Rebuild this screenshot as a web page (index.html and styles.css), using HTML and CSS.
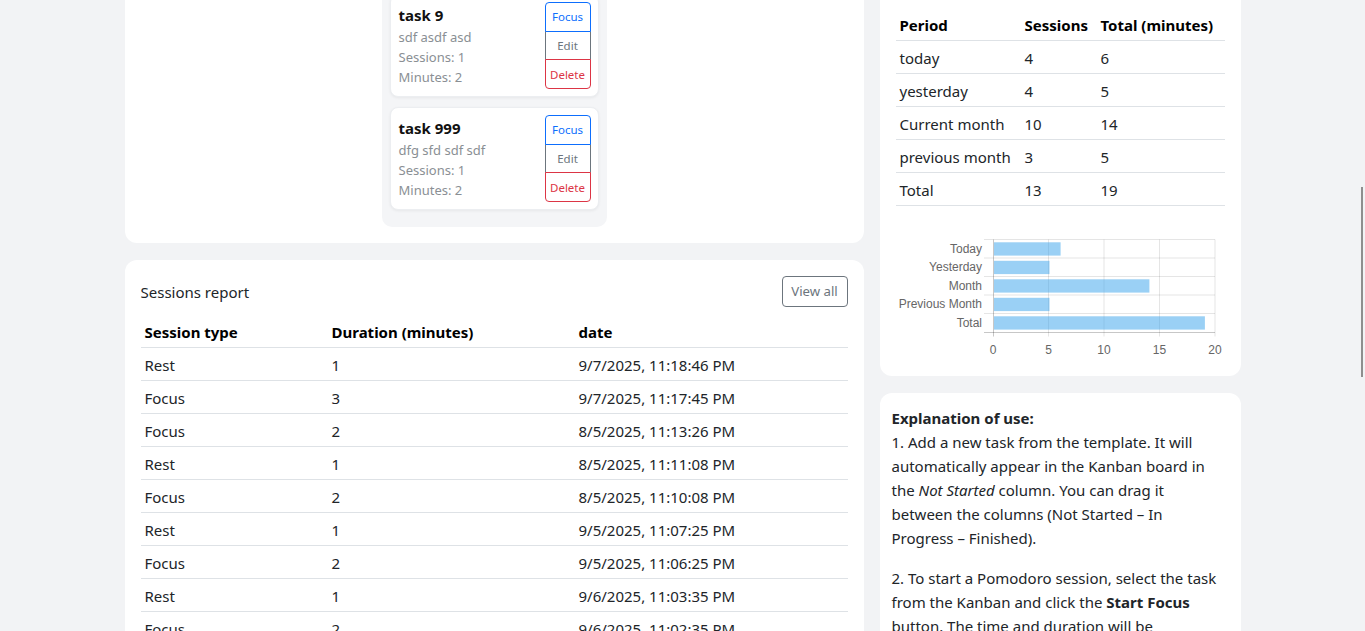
FILE: index.html
```html
<!DOCTYPE html>
<html lang="en">
<head>
<meta charset="utf-8">
<title>Pomodoro Kanban</title>
<link rel="stylesheet" href="styles.css">
</head>
<body>
<div class="page">
  <div class="col">
    <section class="card board-card">
      <div class="board">
        <div class="kcol kcol-short">
          <h6 class="kcol-title">Not Started</h6>
        </div>
        <div class="kcol">
          <h6 class="kcol-title">In Progress</h6>
          <div class="task">
            <div class="task-body">
              <div class="task-title">task 9</div>
              <div class="task-meta">sdf asdf asd</div>
              <div class="task-meta">Sessions: 1</div>
              <div class="task-meta">Minutes: 2</div>
            </div>
            <div class="btn-vgroup">
              <button class="sbtn sbtn-blue">Focus</button>
              <button class="sbtn sbtn-gray">Edit</button>
              <button class="sbtn sbtn-red">Delete</button>
            </div>
          </div>
          <div class="task">
            <div class="task-body">
              <div class="task-title">task 999</div>
              <div class="task-meta">dfg sfd sdf sdf</div>
              <div class="task-meta">Sessions: 1</div>
              <div class="task-meta">Minutes: 2</div>
            </div>
            <div class="btn-vgroup">
              <button class="sbtn sbtn-blue">Focus</button>
              <button class="sbtn sbtn-gray">Edit</button>
              <button class="sbtn sbtn-red">Delete</button>
            </div>
          </div>
        </div>
        <div class="kcol kcol-short">
          <h6 class="kcol-title">Finished</h6>
        </div>
      </div>
    </section>

    <section class="card sessions-card">
      <div class="sessions-head">
        <span class="sessions-title">Sessions report</span>
        <button class="btn-outline">View all</button>
      </div>
      <table class="tbl sessions-tbl">
        <thead>
          <tr><th class="c1">Session type</th><th class="c2">Duration (minutes)</th><th>date</th></tr>
        </thead>
        <tbody>
          <tr><td>Rest</td><td>1</td><td>9/7/2025, 11:18:46 PM</td></tr>
          <tr><td>Focus</td><td>3</td><td>9/7/2025, 11:17:45 PM</td></tr>
          <tr><td>Focus</td><td>2</td><td>8/5/2025, 11:13:26 PM</td></tr>
          <tr><td>Rest</td><td>1</td><td>8/5/2025, 11:11:08 PM</td></tr>
          <tr><td>Focus</td><td>2</td><td>8/5/2025, 11:10:08 PM</td></tr>
          <tr><td>Rest</td><td>1</td><td>9/5/2025, 11:07:25 PM</td></tr>
          <tr><td>Focus</td><td>2</td><td>9/5/2025, 11:06:25 PM</td></tr>
          <tr><td>Rest</td><td>1</td><td>9/6/2025, 11:03:35 PM</td></tr>
          <tr><td>Focus</td><td>2</td><td>9/6/2025, 11:02:35 PM</td></tr>
          <tr><td>Rest</td><td>1</td><td>9/6/2025, 10:59:35 PM</td></tr>
        </tbody>
      </table>
    </section>
  </div>

  <div class="col">
    <section class="card stats-card">
      <h5 class="stats-title">Statistics</h5>
      <table class="tbl stats-tbl">
        <thead>
          <tr><th class="s1">Period</th><th class="s2">Sessions</th><th>Total (minutes)</th></tr>
        </thead>
        <tbody>
          <tr><td>today</td><td>4</td><td>6</td></tr>
          <tr><td>yesterday</td><td>4</td><td>5</td></tr>
          <tr><td>Current month</td><td>10</td><td>14</td></tr>
          <tr><td>previous month</td><td>3</td><td>5</td></tr>
          <tr><td>Total</td><td>13</td><td>19</td></tr>
        </tbody>
      </table>
      <svg class="chart" width="329" height="130" viewBox="0 0 329 130" xmlns="http://www.w3.org/2000/svg">
        <g stroke="rgba(0,0,0,0.1)" stroke-width="1">
          <line x1="152.5" y1="9.5" x2="152.5" y2="106.5"/>
          <line x1="208" y1="9.5" x2="208" y2="106.5"/>
          <line x1="263.5" y1="9.5" x2="263.5" y2="106.5"/>
          <line x1="319" y1="9.5" x2="319" y2="106.5"/>
          <line x1="88" y1="9.5" x2="319" y2="9.5"/>
          <line x1="88" y1="28" x2="319" y2="28"/>
          <line x1="88" y1="46.5" x2="319" y2="46.5"/>
          <line x1="88" y1="65" x2="319" y2="65"/>
          <line x1="88" y1="83.5" x2="319" y2="83.5"/>
        </g>
        <g stroke="rgba(0,0,0,0.22)" stroke-width="1">
          <line x1="97.5" y1="9.5" x2="97.5" y2="106.5"/>
          <line x1="88" y1="102.5" x2="319" y2="102.5"/>
        </g>
        <g fill="rgba(54,162,235,0.5)">
          <rect x="98" y="12.3" width="66.6" height="13.3"/>
          <rect x="98" y="30.8" width="55.5" height="13.3"/>
          <rect x="98" y="49.3" width="155.4" height="13.3"/>
          <rect x="98" y="67.8" width="55.5" height="13.3"/>
          <rect x="98" y="86.3" width="210.9" height="13.3"/>
        </g>
        <g class="chart-label" text-anchor="end">
          <text x="86" y="22.5">Today</text>
          <text x="86" y="41">Yesterday</text>
          <text x="86" y="59.5">Month</text>
          <text x="86" y="78">Previous Month</text>
          <text x="86" y="96.5">Total</text>
        </g>
        <g class="chart-label" text-anchor="middle">
          <text x="97" y="123.5">0</text>
          <text x="152.5" y="123.5">5</text>
          <text x="208" y="123.5">10</text>
          <text x="263.5" y="123.5">15</text>
          <text x="319" y="123.5">20</text>
        </g>
      </svg>
    </section>

    <section class="card help-card">
      <p><strong>Explanation of use:</strong><br>
      1. Add a new task from the template. It will automatically appear in the Kanban board in the <em>Not Started</em> column. You can drag it between the columns (Not Started – In Progress – Finished).</p>
      <p>2. To start a Pomodoro session, select the task from the Kanban and click the <strong>Start Focus</strong> button. The time and duration will be automatically recorded in the Sessions report.</p>
    </section>
  </div>
</div>
<div class="scroll-thumb"></div>
</body>
</html>
```
FILE: styles.css
```css
* { box-sizing: border-box; }

html, body {
  height: 100%;
}

body {
  margin: 0;
  overflow: hidden;
  background: #f2f3f5;
  font-family: "Noto Sans", "Open Sans", sans-serif;
  font-size: 15px;
  line-height: 24px;
  color: #212529;
}

.page {
  width: 1116px;
  margin: -62px auto 0;
  display: grid;
  grid-template-columns: 739px 361px;
  column-gap: 16px;
  align-items: start;
}

.col {
  display: flex;
  flex-direction: column;
  gap: 17px;
}

.card {
  background: #fff;
  border-radius: 12px;
}

/* Kanban board */
.board-card {
  padding: 16px;
}

.board {
  display: grid;
  grid-template-columns: repeat(3, 225px);
  column-gap: 16px;
  align-items: start;
}

.kcol {
  background: #f4f5f7;
  border-radius: 10px;
  padding: 8px 8px 7px;
}

.kcol-short {
  height: 40px;
}

.kcol-title {
  margin: 0 0 8px;
  font-size: 15px;
  line-height: 24px;
  font-weight: 700;
}

.task {
  display: flex;
  justify-content: space-between;
  align-items: flex-start;
  background: #fff;
  border: 1px solid #eceef1;
  border-radius: 8px;
  box-shadow: 0 1px 3px rgba(0, 0, 0, 0.06);
  padding: 7px 7px 7px 8px;
  margin-bottom: 10px;
}

.task-body {
  padding-top: 1px;
}

.task-title {
  font-size: 15px;
  font-weight: 700;
  line-height: 24px;
  color: #111;
}

.task-meta {
  font-size: 13px;
  line-height: 20px;
  color: #8a8f94;
}

.btn-vgroup {
  display: flex;
  flex-direction: column;
  width: 46px;
}

.sbtn {
  font-family: inherit;
  font-size: 11.5px;
  line-height: 17px;
  height: 29.67px;
  padding: 0;
  background: #fff;
  border: 1px solid;
  border-radius: 0;
  margin-top: -1px;
  position: relative;
}

.sbtn:first-child {
  margin-top: 0;
  border-radius: 4px 4px 0 0;
}

.sbtn:last-child {
  border-radius: 0 0 4px 4px;
}

.sbtn-blue { color: #0d6efd; border-color: #0d6efd; z-index: 1; }
.sbtn-gray { color: #6c757d; border-color: #6c757d; }
.sbtn-red  { color: #dc3545; border-color: #dc3545; z-index: 1; }

/* Sessions report */
.sessions-card {
  padding: 16px;
}

.sessions-head {
  display: flex;
  justify-content: space-between;
  align-items: center;
  height: 31px;
  margin-bottom: 8px;
}

.sessions-title {
  font-size: 15px;
  line-height: 24px;
  padding-top: 1px;
  color: #212529;
}

.btn-outline {
  font-family: inherit;
  font-size: 13.2px;
  line-height: 20px;
  height: 31px;
  width: 66px;
  padding: 0;
  background: #fff;
  color: #6c757d;
  border: 1px solid #6c757d;
  border-radius: 4px;
}

.tbl {
  width: 100%;
  border-collapse: collapse;
}

.tbl th,
.tbl td {
  text-align: left;
  padding: 5px 4px 3px;
  border-bottom: 1px solid #dee2e6;
  font-size: 15px;
  line-height: 24px;
  white-space: nowrap;
}

.tbl th {
  font-weight: 700;
  color: #000;
}

.sessions-tbl .c1 { width: 187px; }
.sessions-tbl .c2 { width: 247px; }

/* Statistics */
.stats-card {
  padding: 16px;
}

.stats-title {
  margin: 0 0 30px;
  font-size: 18px;
  line-height: 24px;
  font-weight: 500;
}

.stats-tbl .s1 { width: 125px; }
.stats-tbl .s2 { width: 76px; }

.chart {
  display: block;
  margin-top: 24px;
}

.chart-label {
  font-family: "Liberation Sans", Arial, sans-serif;
  font-size: 12px;
  fill: #666;
}

/* Help */
.help-card {
  padding: 13px 12px 12px;
}

.help-card p {
  margin: 0 0 16px;
}

.help-card strong {
  font-weight: 700;
}

/* overlay scrollbar thumb */
.scroll-thumb {
  position: fixed;
  left: 1361px;
  top: 187px;
  width: 2px;
  height: 190px;
  background: #8e8e8e;
}
```
